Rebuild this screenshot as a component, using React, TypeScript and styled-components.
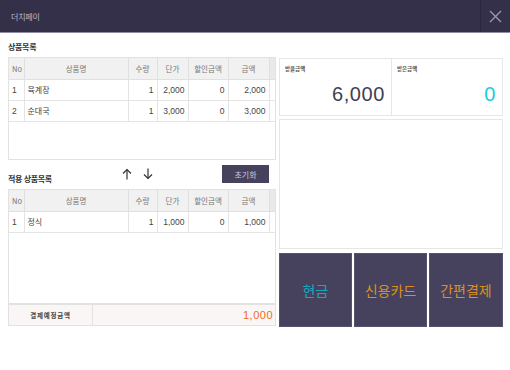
import React from "react";
import styled, { createGlobalStyle } from "styled-components";

const Global = createGlobalStyle`
  html, body { margin: 0; padding: 0; background: #fff; }
  body { font-family: "Noto Sans CJK KR", "Liberation Sans", sans-serif; }
  * { box-sizing: border-box; }
`;

const Page = styled.div`
  width: 510px;
  height: 370px;
  background: #fff;
  display: flex;
  flex-direction: column;
`;

const Header = styled.div`
  height: 33px;
  background: #34304a;
  border-bottom: 1px solid #8f8ca6;
  display: flex;
  align-items: stretch;
`;

const HeaderTitle = styled.div`
  flex: 1;
  display: flex;
  align-items: center;
  padding-left: 11px;
  font-size: 8px;
  color: #bdbbcd;
  letter-spacing: -0.2px;
`;

const CloseButton = styled.div`
  width: 30px;
  border-left: 1px solid #2b283e;
  display: flex;
  align-items: center;
  justify-content: center;
`;

const Main = styled.div`
  display: flex;
  gap: 3px;
  padding: 0 7px 0 8px;
`;

const LeftCol = styled.div`
  width: 268px;
  display: flex;
  flex-direction: column;
`;

const SectionHeader = styled.div<{ $h: number }>`
  height: ${(p) => p.$h}px;
  display: flex;
  align-items: flex-end;
  padding-bottom: 5px;
  position: relative;
`;

const SectionTitle = styled.div`
  font-size: 8px;
  font-weight: 700;
  color: #333;
  letter-spacing: -0.3px;
`;

const Arrows = styled.div`
  display: flex;
  gap: 11px;
  margin-left: 70px;
  margin-bottom: 4px;
  align-self: flex-end;
`;

const ResetButton = styled.div`
  margin-left: auto;
  margin-right: 7px;
  margin-bottom: 1px;
  width: 47px;
  height: 18px;
  background: #46425e;
  color: #c9c7d8;
  font-size: 8px;
  display: flex;
  align-items: center;
  justify-content: center;
`;

const TableBox = styled.div<{ $h: number }>`
  height: ${(p) => p.$h}px;
  border: 1px solid #e2e2e2;
  display: flex;
  flex-direction: column;
`;

const Table = styled.table`
  width: 100%;
  border-collapse: collapse;
  table-layout: fixed;
`;

const Th = styled.th<{ $w: number }>`
  width: ${(p) => p.$w}px;
  height: 21px;
  background: #f1f1f1;
  border-right: 1px solid #e0e0e0;
  border-bottom: 1px solid #e0e0e0;
  font-size: 7.5px;
  font-weight: 400;
  color: #777;
  padding: 0;
  text-align: center;
  &:first-child { text-align: left; padding-left: 3px; }
  &:last-child { border-right: none; background: #e9e9e9; }
`;

const Td = styled.td<{ $align?: string }>`
  height: 21px;
  border-right: 1px solid #e4e4e4;
  border-bottom: 1px solid #e4e4e4;
  font-size: 8.5px;
  color: #444;
  padding: 0 3px;
  text-align: ${(p) => p.$align || "right"};
  font-family: "Liberation Sans", "Noto Sans CJK KR", sans-serif;
  white-space: nowrap;
  overflow: hidden;
  &:last-child { border-right: none; }
`;

const NameCell = styled(Td)`
  font-family: "Noto Sans CJK KR", sans-serif;
  font-size: 8px;
  text-align: left;
`;

const Spacer = styled.div`
  flex: 1;
`;

const Footer = styled.div`
  height: 22px;
  border-top: 2px solid #e2e2e2;
  background: #faf6f6;
  display: flex;
`;

const FooterLabel = styled.div`
  width: 84px;
  border-right: 1px solid #e6e2e2;
  display: flex;
  align-items: center;
  justify-content: center;
  font-size: 6.5px;
  font-weight: 700;
  letter-spacing: 0.8px;
  color: #444;
`;

const FooterValue = styled.div`
  flex: 1;
  display: flex;
  align-items: center;
  justify-content: flex-end;
  padding-right: 2px;
  font-family: "Liberation Sans", sans-serif;
  font-size: 11px;
  color: #f26a1b;
  letter-spacing: 0.5px;
`;

const RightCol = styled.div`
  width: 224px;
  display: flex;
  flex-direction: column;
  padding-top: 25px;
`;

const AmountRow = styled.div`
  height: 58px;
  display: grid;
  grid-template-columns: 111px 1fr;
  border: 1px solid #e6e6e6;
`;

const AmountBox = styled.div`
  display: flex;
  flex-direction: column;
  padding: 6px 6px 0 5px;
  & + & { border-left: 1px solid #e6e6e6; }
`;

const AmountLabel = styled.div`
  font-size: 5.5px;
  font-weight: 700;
  color: #555;
`;

const AmountValue = styled.div<{ $color: string }>`
  margin-top: 10px;
  text-align: right;
  font-family: "Liberation Sans", sans-serif;
  font-size: 20px;
  letter-spacing: 0.6px;
  color: ${(p) => p.$color};
`;

const InfoBox = styled.div`
  margin-top: 3px;
  height: 130px;
  border: 1px solid #e6e6e6;
`;

const PayRow = styled.div`
  margin-top: 4px;
  height: 74px;
  display: grid;
  grid-template-columns: 73px 73px 1fr;
  gap: 2px;
`;

const PayButton = styled.div<{ $color: string }>`
  background: #46425d;
  border: 1px solid #57536e;
  display: flex;
  align-items: center;
  justify-content: center;
  font-size: 14px;
  color: ${(p) => p.$color};
`;

const cols = [15, 104, 29, 31, 40, 41, 6];
const heads = ["No", "상품명", "수량", "단가", "할인금액", "금액", ""];

type Row = { no: number; name: string; qty: number; price: string; disc: number; amt: string };

const ItemTable = ({ rows }: { rows: Row[] }) => (
  <Table>
    <thead>
      <tr>
        {heads.map((h, i) => (
          <Th key={i} $w={cols[i]}>{h}</Th>
        ))}
      </tr>
    </thead>
    <tbody>
      {rows.map((r) => (
        <tr key={r.no}>
          <Td $align="left">{r.no}</Td>
          <NameCell>{r.name}</NameCell>
          <Td>{r.qty}</Td>
          <Td>{r.price}</Td>
          <Td>{r.disc}</Td>
          <Td>{r.amt}</Td>
          <Td />
        </tr>
      ))}
    </tbody>
  </Table>
);

const ArrowIcon = ({ down }: { down?: boolean }) => (
  <svg width="10" height="12" viewBox="0 0 10 12">
    <g stroke="#333" strokeWidth="1.2" fill="none" transform={down ? "rotate(180 5 6)" : undefined}>
      <line x1="5" y1="1.5" x2="5" y2="11.5" />
      <polyline points="1,5.5 5,1.5 9,5.5" />
    </g>
  </svg>
);

export default function App() {
  return (
    <Page>
      <Global />
      <Header>
        <HeaderTitle>더치페이</HeaderTitle>
        <CloseButton>
          <svg width="13" height="13" viewBox="0 0 13 13">
            <g stroke="#9c99b6" strokeWidth="1.2">
              <line x1="1" y1="1" x2="12" y2="12" />
              <line x1="12" y1="1" x2="1" y2="12" />
            </g>
          </svg>
        </CloseButton>
      </Header>
      <Main>
        <LeftCol>
          <SectionHeader $h={24}>
            <SectionTitle>상품목록</SectionTitle>
          </SectionHeader>
          <TableBox $h={103}>
            <ItemTable
              rows={[
                { no: 1, name: "육계장", qty: 1, price: "2,000", disc: 0, amt: "2,000" },
                { no: 2, name: "순대국", qty: 1, price: "3,000", disc: 0, amt: "3,000" },
              ]}
            />
          </TableBox>
          <SectionHeader $h={29}>
            <SectionTitle>적용 상품목록</SectionTitle>
            <Arrows>
              <ArrowIcon />
              <ArrowIcon down />
            </Arrows>
            <ResetButton>초기화</ResetButton>
          </SectionHeader>
          <TableBox $h={137}>
            <ItemTable rows={[{ no: 1, name: "정식", qty: 1, price: "1,000", disc: 0, amt: "1,000" }]} />
            <Spacer />
            <Footer>
              <FooterLabel>결제예정금액</FooterLabel>
              <FooterValue>1,000</FooterValue>
            </Footer>
          </TableBox>
        </LeftCol>
        <RightCol>
          <AmountRow>
            <AmountBox>
              <AmountLabel>받을금액</AmountLabel>
              <AmountValue $color="#3f3e52">6,000</AmountValue>
            </AmountBox>
            <AmountBox>
              <AmountLabel>받은금액</AmountLabel>
              <AmountValue $color="#1ccbe0">0</AmountValue>
            </AmountBox>
          </AmountRow>
          <InfoBox />
          <PayRow>
            <PayButton $color="#1ba6bf">현금</PayButton>
            <PayButton $color="#d8901f">신용카드</PayButton>
            <PayButton $color="#d8901f">간편결제</PayButton>
          </PayRow>
        </RightCol>
      </Main>
    </Page>
  );
}
